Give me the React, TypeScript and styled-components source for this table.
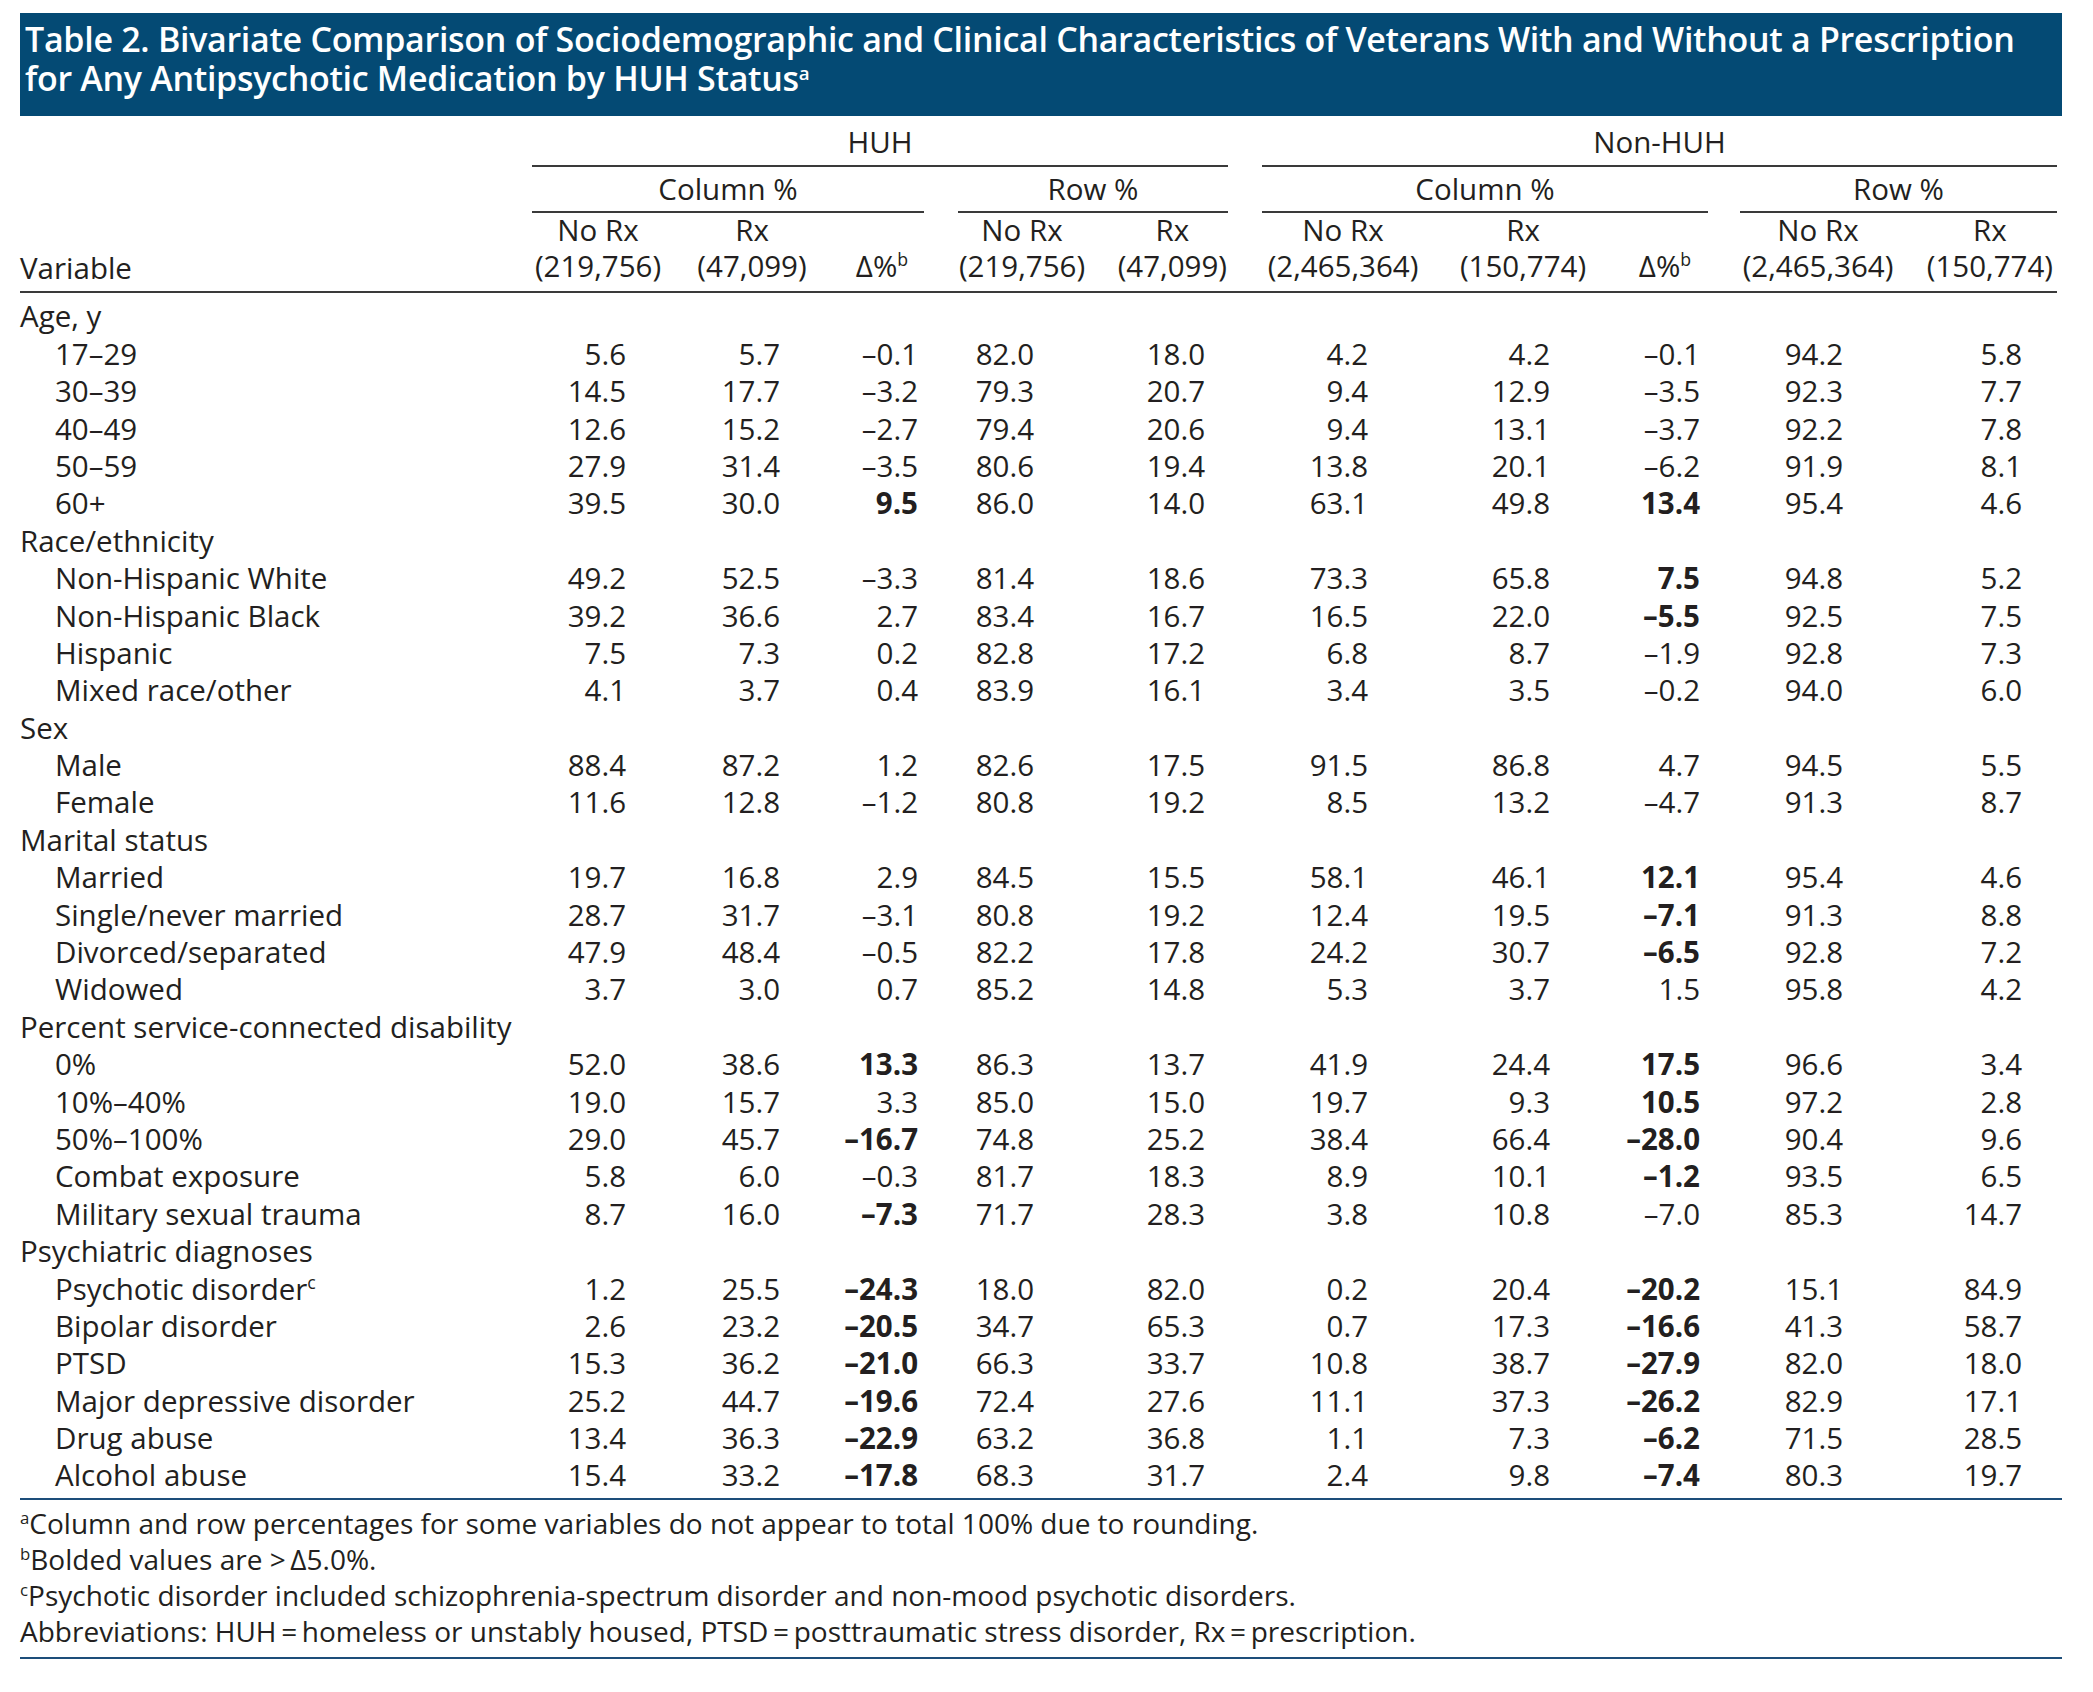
import React from 'react';
import styled, { createGlobalStyle } from 'styled-components';

const INK = '#231f20';
const NAVY = '#044a74';
const BLUE_RULE = '#1d4e7a';
const GRAY_RULE = '#3a3a3a';

// label + 3 cols + gap + 2 cols + gap + 3 cols + gap + 2 cols
const TEMPLATE =
  '512px 132px 176px 84px 34px 128px 142px 34px 162px 198px 86px 32px 156px 161px';

const GlobalStyle = createGlobalStyle`
  body {
    margin: 0;
    background: #fff;
    color: ${INK};
    font-family: 'Open Sans', 'Liberation Sans', sans-serif;
  }
`;

type Col = {
  line: number;
  pad: number;
  top: string;
  sub: string;
  sup?: string;
  headEnd?: number;
};

const COLS: Col[] = [
  { line: 2, pad: 38, top: 'No Rx', sub: '(219,756)' },
  { line: 3, pad: 60, top: 'Rx', sub: '(47,099)' },
  { line: 4, pad: 6, top: '', sub: 'Δ%', sup: 'b' },
  { line: 6, pad: 52, top: 'No Rx', sub: '(219,756)' },
  { line: 7, pad: 23, top: 'Rx', sub: '(47,099)', headEnd: 1 },
  { line: 9, pad: 56, top: 'No Rx', sub: '(2,465,364)' },
  { line: 10, pad: 72, top: 'Rx', sub: '(150,774)' },
  { line: 11, pad: 8, top: '', sub: 'Δ%', sup: 'b' },
  { line: 13, pad: 53, top: 'No Rx', sub: '(2,465,364)' },
  { line: 14, pad: 35, top: 'Rx', sub: '(150,774)', headEnd: 4 },
];

type DataRow = { label: string; sup?: string; group?: boolean; v?: string[] };

const g = (label: string): DataRow => ({ label, group: true });
const r = (label: string, s: string, sup?: string): DataRow => ({
  label,
  sup,
  v: s.split(' '),
});

// '*' marks a bolded value
const ROWS: DataRow[] = [
  g('Age, y'),
  r('17–29', '5.6 5.7 –0.1 82.0 18.0 4.2 4.2 –0.1 94.2 5.8'),
  r('30–39', '14.5 17.7 –3.2 79.3 20.7 9.4 12.9 –3.5 92.3 7.7'),
  r('40–49', '12.6 15.2 –2.7 79.4 20.6 9.4 13.1 –3.7 92.2 7.8'),
  r('50–59', '27.9 31.4 –3.5 80.6 19.4 13.8 20.1 –6.2 91.9 8.1'),
  r('60+', '39.5 30.0 *9.5 86.0 14.0 63.1 49.8 *13.4 95.4 4.6'),
  g('Race/ethnicity'),
  r('Non-Hispanic White', '49.2 52.5 –3.3 81.4 18.6 73.3 65.8 *7.5 94.8 5.2'),
  r('Non-Hispanic Black', '39.2 36.6 2.7 83.4 16.7 16.5 22.0 *–5.5 92.5 7.5'),
  r('Hispanic', '7.5 7.3 0.2 82.8 17.2 6.8 8.7 –1.9 92.8 7.3'),
  r('Mixed race/other', '4.1 3.7 0.4 83.9 16.1 3.4 3.5 –0.2 94.0 6.0'),
  g('Sex'),
  r('Male', '88.4 87.2 1.2 82.6 17.5 91.5 86.8 4.7 94.5 5.5'),
  r('Female', '11.6 12.8 –1.2 80.8 19.2 8.5 13.2 –4.7 91.3 8.7'),
  g('Marital status'),
  r('Married', '19.7 16.8 2.9 84.5 15.5 58.1 46.1 *12.1 95.4 4.6'),
  r('Single/never married', '28.7 31.7 –3.1 80.8 19.2 12.4 19.5 *–7.1 91.3 8.8'),
  r('Divorced/separated', '47.9 48.4 –0.5 82.2 17.8 24.2 30.7 *–6.5 92.8 7.2'),
  r('Widowed', '3.7 3.0 0.7 85.2 14.8 5.3 3.7 1.5 95.8 4.2'),
  g('Percent service-connected disability'),
  r('0%', '52.0 38.6 *13.3 86.3 13.7 41.9 24.4 *17.5 96.6 3.4'),
  r('10%–40%', '19.0 15.7 3.3 85.0 15.0 19.7 9.3 *10.5 97.2 2.8'),
  r('50%–100%', '29.0 45.7 *–16.7 74.8 25.2 38.4 66.4 *–28.0 90.4 9.6'),
  r('Combat exposure', '5.8 6.0 –0.3 81.7 18.3 8.9 10.1 *–1.2 93.5 6.5'),
  r('Military sexual trauma', '8.7 16.0 *–7.3 71.7 28.3 3.8 10.8 –7.0 85.3 14.7'),
  g('Psychiatric diagnoses'),
  r('Psychotic disorder', '1.2 25.5 *–24.3 18.0 82.0 0.2 20.4 *–20.2 15.1 84.9', 'c'),
  r('Bipolar disorder', '2.6 23.2 *–20.5 34.7 65.3 0.7 17.3 *–16.6 41.3 58.7'),
  r('PTSD', '15.3 36.2 *–21.0 66.3 33.7 10.8 38.7 *–27.9 82.0 18.0'),
  r('Major depressive disorder', '25.2 44.7 *–19.6 72.4 27.6 11.1 37.3 *–26.2 82.9 17.1'),
  r('Drug abuse', '13.4 36.3 *–22.9 63.2 36.8 1.1 7.3 *–6.2 71.5 28.5'),
  r('Alcohol abuse', '15.4 33.2 *–17.8 68.3 31.7 2.4 9.8 *–7.4 80.3 19.7'),
];

const App = () => {
  return (
    <Page>
      <GlobalStyle />
      <TitleBar>
        Table 2. Bivariate Comparison of Sociodemographic and Clinical Characteristics of
        Veterans With and Without a Prescription
        <br />
        for Any Antipsychotic Medication by HUH Status<TitleSup>a</TitleSup>
      </TitleBar>

      <HeadGrid>
        <GroupHead $span="2 / 8" $row={1}>HUH</GroupHead>
        <GroupHead $span="9 / 15" $row={1}>Non-HUH</GroupHead>
        <GroupHead $span="2 / 5" $row={2}>Column %</GroupHead>
        <GroupHead $span="6 / 8" $row={2}>Row %</GroupHead>
        <GroupHead $span="9 / 12" $row={2}>Column %</GroupHead>
        <GroupHead $span="13 / 15" $row={2}>Row %</GroupHead>
        <VariableHead>Variable</VariableHead>
        {COLS.map((c, i) => (
          <ColHead key={i} $col={c.line} $end={c.headEnd}>
            <HeadLine>{c.top || '\u00a0'}</HeadLine>
            <HeadLine>
              {c.sub}
              {c.sup && <Sup>{c.sup}</Sup>}
            </HeadLine>
          </ColHead>
        ))}
      </HeadGrid>

      <Body>
        {ROWS.map((row, i) => (
          <Row key={i}>
            <Label $indent={!row.group}>
              {row.label}
              {row.sup && <Sup>{row.sup}</Sup>}
            </Label>
            {row.v &&
              row.v.map((val, j) => {
                const bold = val.startsWith('*');
                return (
                  <Num key={j} $col={COLS[j].line} $pad={COLS[j].pad} $bold={bold}>
                    {bold ? val.slice(1) : val}
                  </Num>
                );
              })}
          </Row>
        ))}
      </Body>

      <Notes>
        <Note>
          <Sup>a</Sup>Column and row percentages for some variables do not appear to total 100% due to
          rounding.
        </Note>
        <Note>
          <Sup>b</Sup>Bolded values are &gt;{'\u2009'}Δ5.0%.
        </Note>
        <Note>
          <Sup>c</Sup>Psychotic disorder included schizophrenia-spectrum disorder and non-mood
          psychotic disorders.
        </Note>
        <Note>
          Abbreviations: HUH{'\u2009=\u2009'}homeless or unstably housed, PTSD{'\u2009=\u2009'}
          posttraumatic stress disorder, Rx{'\u2009=\u2009'}prescription.
        </Note>
      </Notes>
    </Page>
  );
};

const Page = styled.div`
  padding: 13px 0 0 20px;
  font-size: 29.5px;
  width: 2042px;
`;

const TitleBar = styled.div`
  box-sizing: border-box;
  width: 2042px;
  background: ${NAVY};
  color: #fff;
  font-weight: 600;
  font-size: 34px;
  line-height: 39px;
  letter-spacing: -0.3px;
  padding: 7px 10px 18px 5px;
  white-space: nowrap;
`;

const TitleSup = styled.sup`
  font-size: 0.55em;
  line-height: 0;
  vertical-align: 0.6em;
  font-weight: 600;
`;

const Sup = styled.sup`
  font-size: 0.6em;
  line-height: 0;
  vertical-align: 0.6em;
`;

const HeadGrid = styled.div`
  display: grid;
  grid-template-columns: ${TEMPLATE};
  padding-top: 7px;
  border-bottom: 2px solid ${GRAY_RULE};
  width: 2037px;
`;

const GroupHead = styled.div<{ $span: string; $row: number }>`
  grid-column: ${(p) => p.$span};
  grid-row: ${(p) => p.$row};
  text-align: center;
  line-height: 37.4px;
  padding: ${(p) => (p.$row === 1 ? '0 0 4.6px' : '3.4px 0 3.2px')};
  border-bottom: 2px solid ${GRAY_RULE};
`;

const VariableHead = styled.div`
  grid-column: 1;
  grid-row: 3;
  align-self: end;
  line-height: 36.5px;
  padding-bottom: 4px;
`;

const ColHead = styled.div<{ $col: number; $end?: number }>`
  grid-column: ${(p) => p.$col};
  grid-row: 3;
  display: flex;
  flex-direction: column;
  align-items: center;
  justify-self: ${(p) => (p.$end !== undefined ? 'end' : 'center')};
  margin: -1px ${(p) => p.$end ?? 0}px 0 0;
  padding-bottom: 6px;
`;

const HeadLine = styled.div`
  line-height: 36.5px;
  white-space: nowrap;
`;

const Body = styled.div`
  width: 2042px;
  padding: 4.4px 0 3.8px;
  border-bottom: 2px solid ${BLUE_RULE};
`;

const Row = styled.div`
  display: grid;
  grid-template-columns: ${TEMPLATE};
  height: 37.4px;
  line-height: 37.4px;
`;

const Label = styled.div<{ $indent: boolean }>`
  grid-column: 1;
  padding-left: ${(p) => (p.$indent ? 35 : 0)}px;
  white-space: nowrap;
`;

const Num = styled.div<{ $col: number; $pad: number; $bold: boolean }>`
  grid-column: ${(p) => p.$col};
  text-align: right;
  padding-right: ${(p) => p.$pad}px;
  font-weight: ${(p) => (p.$bold ? 700 : 400)};
  white-space: nowrap;
`;

const Notes = styled.div`
  width: 2042px;
  padding: 5px 0 8px;
  border-bottom: 2px solid ${BLUE_RULE};
  font-size: 28px;
`;

const Note = styled.div`
  line-height: 36px;
  white-space: nowrap;
`;

export default App;
